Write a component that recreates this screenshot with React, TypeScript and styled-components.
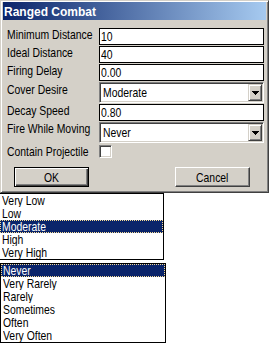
import React from "react";
import styled, { createGlobalStyle } from "styled-components";

const FONT = `"Liberation Sans", Arial, sans-serif`;

const GlobalStyle = createGlobalStyle`
  html, body { margin: 0; padding: 0; background: #fff; }
  body { font-family: ${FONT}; font-size: 13px; color: #000; }
  * { box-sizing: border-box; }
`;

/* MS Sans Serif is much narrower than Arial: condense the glyphs horizontally */
const Txt = styled.span<{ $center?: boolean }>`
  display: inline-block;
  white-space: nowrap;
  transform: scaleX(0.8);
  transform-origin: ${(p) => (p.$center ? "50% 50%" : "0 50%")};
`;

const Window = styled.div`
  width: 269px;
  height: 193px;
  background: #d4d0c8;
  border: 1px solid;
  border-color: #d4d0c8 #404040 #404040 #d4d0c8;
  box-shadow: inset 1px 1px #fff, inset -1px -1px #808080;
  padding: 1px 2px 2px 2px;
  display: flex;
  flex-direction: column;
`;

const TitleBar = styled.div`
  height: 18px;
  flex: none;
  background: linear-gradient(to right, #0a246a, #a6caf0);
  color: #fff;
  font-family: "Liberation Sans", sans-serif;
  font-weight: bold;
  font-size: 12px;
  line-height: 14px;
  padding: 3px 0 0 1px;
  white-space: nowrap;
`;

const Body = styled.div`
  padding: 8px 0 0 4px;
  display: flex;
  flex-direction: column;
`;

const Form = styled.div`
  display: grid;
  grid-template-columns: 92px 165px;
  row-gap: 1px;
`;

const Label = styled.div<{ $top?: number }>`
  line-height: 13px;
  align-self: start;
  padding-top: ${(p) => p.$top ?? 0}px;
  white-space: nowrap;
`;

const TextBox = styled.div`
  height: 17px;
  border: 1px solid #000;
  background: #fff;
  padding: 1px 1px 0;
  line-height: 14px;
  overflow: hidden;
`;

const Combo = styled.div`
  height: 21px;
  display: flex;
  align-items: stretch;
  background: #fff;
  border: 1px solid;
  border-color: #808080 #fff #fff #808080;
  box-shadow: inset 1px 1px #404040, inset -1px -1px #d4d0c8;
  padding: 1px;
`;

const ComboText = styled.div`
  flex: 1;
  line-height: 17px;
  padding-left: 2px;
  overflow: hidden;
`;

const DropButton = styled.div`
  width: 14px;
  flex: none;
  background: #d4d0c8;
  border: 1px solid;
  border-color: #d4d0c8 #404040 #404040 #d4d0c8;
  box-shadow: inset 1px 1px #fff, inset -1px -1px #808080;
  display: flex;
  align-items: center;
  justify-content: center;
`;

const CheckCell = styled.div`
  height: 14px;
`;

const CheckBox = styled.div`
  width: 13px;
  height: 13px;
  margin-top: 1px;
  background: #fff;
  border: 1px solid;
  border-color: #808080 #fff #fff #808080;
  box-shadow: inset 1px 1px #404040, inset -1px -1px #d4d0c8;
`;

const ButtonRow = styled.div`
  display: flex;
  justify-content: space-between;
  margin-top: 9px;
  padding: 0 16px 0 7px;
`;

const Button = styled.div<{ $default?: boolean }>`
  width: 75px;
  height: 20px;
  display: flex;
  align-items: center;
  justify-content: center;
  background: #d4d0c8;
  border: 1px solid;
  border-color: ${(p) => (p.$default ? "#000" : "#fff #404040 #404040 #fff")};
  box-shadow: ${(p) =>
    p.$default
      ? "inset 1px 1px #fff, inset -1px -1px #404040, inset -2px -2px #808080"
      : "inset -1px -1px #808080"};
  line-height: 13px;
`;

const ListBox = styled.div<{ $framed?: boolean }>`
  background: #fff;
  width: ${(p) => (p.$framed ? 166 : 164)}px;
  margin-top: ${(p) => (p.$framed ? 3 : 0)}px;
  border: 1px solid #000;
  border-left-width: ${(p) => (p.$framed ? 1 : 0)}px;
`;

const ListItem = styled.div<{ $selected?: boolean }>`
  height: 13px;
  line-height: 13px;
  padding-left: 2px;
  overflow: hidden;
  background: ${(p) => (p.$selected ? "#0a246a" : "#fff")};
  color: ${(p) => (p.$selected ? "#fff" : "#000")};
  outline: ${(p) => (p.$selected ? "1px dotted #f5db95" : "none")};
  outline-offset: -1px;
`;

const Arrow = () => (
  <svg width="7" height="4" viewBox="0 0 7 4" shapeRendering="crispEdges">
    <rect x="0" y="0" width="7" height="1" fill="#000" />
    <rect x="1" y="1" width="5" height="1" fill="#000" />
    <rect x="2" y="2" width="3" height="1" fill="#000" />
    <rect x="3" y="3" width="1" height="1" fill="#000" />
  </svg>
);

const Select = ({ value }: { value: string }) => (
  <Combo>
    <ComboText>
      <Txt>{value}</Txt>
    </ComboText>
    <DropButton>
      <Arrow />
    </DropButton>
  </Combo>
);

const Field = ({ value }: { value: string }) => (
  <TextBox>
    <Txt>{value}</Txt>
  </TextBox>
);

const desire = ["Very Low", "Low", "Moderate", "High", "Very High"];
const freq = ["Never", "Very Rarely", "Rarely", "Sometimes", "Often", "Very Often"];

export default function App() {
  return (
    <>
      <GlobalStyle />
      <Window>
        <TitleBar>Ranged Combat</TitleBar>
        <Body>
          <Form>
            <Label><Txt>Minimum Distance</Txt></Label>
            <Field value="10" />
            <Label><Txt>Ideal Distance</Txt></Label>
            <Field value="40" />
            <Label><Txt>Firing Delay</Txt></Label>
            <Field value="0.00" />
            <Label $top={1}><Txt>Cover Desire</Txt></Label>
            <Select value="Moderate" />
            <Label><Txt>Decay Speed</Txt></Label>
            <Field value="0.80" />
            <Label><Txt>Fire While Moving</Txt></Label>
            <Select value="Never" />
            <Label $top={1}><Txt>Contain Projectile</Txt></Label>
            <CheckCell>
              <CheckBox />
            </CheckCell>
          </Form>
          <ButtonRow>
            <Button $default><Txt $center>OK</Txt></Button>
            <Button><Txt $center>Cancel</Txt></Button>
          </ButtonRow>
        </Body>
      </Window>
      <ListBox>
        {desire.map((d) => (
          <ListItem key={d} $selected={d === "Moderate"}>
            <Txt>{d}</Txt>
          </ListItem>
        ))}
      </ListBox>
      <ListBox $framed>
        {freq.map((d) => (
          <ListItem key={d} $selected={d === "Never"}>
            <Txt>{d}</Txt>
          </ListItem>
        ))}
      </ListBox>
    </>
  );
}
